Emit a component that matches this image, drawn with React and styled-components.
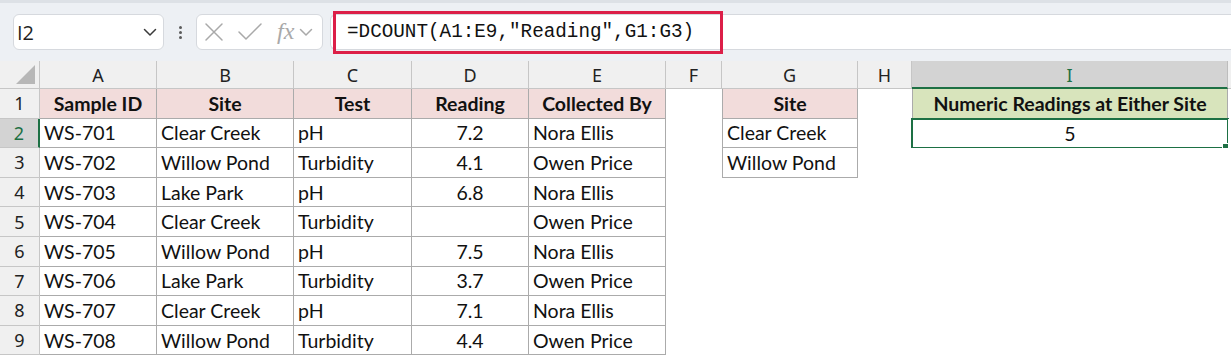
import React from "react";
import styled, { createGlobalStyle } from "styled-components";

const GlobalStyle = createGlobalStyle`
  html, body { margin: 0; padding: 0; background: #ffffff; }
  body { font-family: "Lato", "Open Sans", sans-serif; overflow: hidden; }
  * { box-sizing: border-box; }
`;

const Page = styled.div`
  width: 1231px;
  height: 357px;
  overflow: hidden;
  background: #ffffff;
`;

const FormulaBar = styled.div`
  height: 62px;
  display: flex;
  align-items: center;
  padding: 0 0 0 13px;
  background: #edf0f4;
  border-top: 3px solid #dde1e6;
  border-bottom: 1px solid #d3d6da;
`;

const NameBox = styled.div`
  width: 151px;
  height: 36px;
  background: #ffffff;
  border: 1px solid #d6d9de;
  border-radius: 6px;
  display: flex;
  align-items: center;
  justify-content: space-between;
  padding: 0 5px 0 3px;
  font-family: "Open Sans", "Noto Sans", sans-serif;
  font-size: 20px;
  color: #1f1f1f;
`;

const Dots = styled.div`
  width: 32px;
  display: flex;
  flex-direction: column;
  align-items: center;
  gap: 2px;
  span {
    width: 3px;
    height: 3px;
    border-radius: 50%;
    background: #5a5a5a;
  }
`;

const FxBox = styled.div`
  width: 127px;
  height: 36px;
  background: #ffffff;
  border: 1px solid #d6d9de;
  border-radius: 6px;
  display: flex;
  align-items: center;
  padding: 0 0 0 6px;
  gap: 12px;
  color: #a9a9a9;
`;

const FxText = styled.span`
  font-family: "Liberation Serif", serif;
  font-style: italic;
  font-size: 24px;
  line-height: 1;
  color: #a9a9a9;
  margin-left: 2px;
  margin-right: -8px;
  margin-bottom: 3px;
`;

const FormulaInput = styled.div`
  flex: 1;
  height: 36px;
  margin-left: 7px;
  background: #ffffff;
  border-top: 1px solid #d6d9de;
  border-bottom: 1px solid #d6d9de;
  border-left: 1px solid #d6d9de;
  border-radius: 6px 0 0 6px;
  display: flex;
  align-items: center;
  padding-left: 2px;
`;

const Highlight = styled.div`
  height: 43px;
  width: 390px;
  border: 3px solid #dc1f48;
  display: flex;
  align-items: center;
  padding-left: 11px;
  font-family: "Liberation Mono", "DejaVu Sans Mono", monospace;
  font-size: 19.3px;
  color: #111111;
  white-space: nowrap;
`;

const Grid = styled.div`
  display: grid;
  grid-template-columns: 40px 117px 137px 118px 117px 137px 56px 136px 54px 316px 1fr;
  grid-template-rows: 28px repeat(9, 29.6px);
  margin-top: -1px;
`;

const Corner = styled.div`
  background: #f0f0f0;
  border-right: 1px solid #c6c6c6;
  border-bottom: 1px solid #c6c6c6;
  position: relative;
  svg { position: absolute; right: 4px; bottom: 4px; }
`;

const ColHeader = styled.div`
  background: ${(p) => (p.$active ? "#d3d3d3" : "#f0f0f0")};
  color: ${(p) => (p.$active ? "#1d7044" : "#222222")};
  border-right: 1px solid ${(p) => (p.$active ? "#bdbdbd" : "#c6c6c6")};
  border-bottom: ${(p) => (p.$active ? "2px solid #1d7044" : "1px solid #c6c6c6")};
  display: flex;
  align-items: center;
  justify-content: center;
  font-family: "Noto Sans", "Open Sans", sans-serif;
  font-size: 18px;
  padding-top: ${(p) => (p.$active ? "1px" : "0")};
`;

const RowHeader = styled.div`
  background: ${(p) => (p.$active ? "#d3d3d3" : "#f0f0f0")};
  color: ${(p) => (p.$active ? "#1d7044" : "#222222")};
  border-right: ${(p) => (p.$active ? "2px solid #1d7044" : "1px solid #c6c6c6")};
  border-bottom: 1px solid #c6c6c6;
  display: flex;
  align-items: center;
  justify-content: center;
  font-family: "Noto Sans", "Open Sans", sans-serif;
  font-size: 18px;
`;

const Cell = styled.div`
  background: ${(p) => p.$bg || "#ffffff"};
  border-right: ${(p) => (p.$boxed ? "1px solid #ababab" : "none")};
  border-bottom: ${(p) => (p.$boxed ? "1px solid #ababab" : "none")};
  border-left: ${(p) => (p.$left ? "1px solid #ababab" : "none")};
  display: flex;
  align-items: center;
  justify-content: ${(p) => (p.$align === "center" ? "center" : "flex-start")};
  padding: 0 4px;
  font-family: "Lato", "Open Sans", sans-serif;
  font-size: 19.5px;
  font-weight: ${(p) => (p.$bold ? 700 : 400)};
  color: #111111;
  white-space: nowrap;
  position: relative;
`;

const ActiveCell = styled(Cell)`
  outline: 2px solid #1d7044;
  outline-offset: -1px;
  border: none;
  &::after {
    content: "";
    position: absolute;
    right: -3px;
    bottom: -4px;
    width: 7px;
    height: 7px;
    background: #1d7044;
    border: 1px solid #ffffff;
  }
`;

const Chevron = ({ color = "#3a3a3a", size = 16 }) => (
  <svg width={size} height={size} viewBox="0 0 16 16" fill="none">
    <path d="M2.5 5.5 L8 11 L13.5 5.5" stroke={color} strokeWidth="1.5" strokeLinecap="round" strokeLinejoin="round" />
  </svg>
);

const Cross = () => (
  <svg width="22" height="22" viewBox="0 0 22 22" fill="none">
    <path d="M3 3 L19 19 M19 3 L3 19" stroke="#a9a9a9" strokeWidth="1.5" strokeLinecap="round" />
  </svg>
);

const Check = () => (
  <svg width="26" height="22" viewBox="0 0 26 22" fill="none">
    <path d="M2 11 L9 18 L24 3" stroke="#a9a9a9" strokeWidth="1.5" strokeLinecap="round" strokeLinejoin="round" />
  </svg>
);

const columns = ["A", "B", "C", "D", "E", "F", "G", "H", "I", ""];

const data = [
  ["WS-701", "Clear Creek", "pH", "7.2", "Nora Ellis"],
  ["WS-702", "Willow Pond", "Turbidity", "4.1", "Owen Price"],
  ["WS-703", "Lake Park", "pH", "6.8", "Nora Ellis"],
  ["WS-704", "Clear Creek", "Turbidity", "", "Owen Price"],
  ["WS-705", "Willow Pond", "pH", "7.5", "Nora Ellis"],
  ["WS-706", "Lake Park", "Turbidity", "3.7", "Owen Price"],
  ["WS-707", "Clear Creek", "pH", "7.1", "Nora Ellis"],
  ["WS-708", "Willow Pond", "Turbidity", "4.4", "Owen Price"],
];

const headers = ["Sample ID", "Site", "Test", "Reading", "Collected By"];
const criteria = ["Site", "Clear Creek", "Willow Pond"];
const PINK = "#f2dcdb";
const GREEN = "#d8e4bc";

export default function App() {
  const rows = [];
  rows.push(
    <React.Fragment key="r1">
      <RowHeader>1</RowHeader>
      {headers.map((h) => (
        <Cell key={h} $boxed $bg={PINK} $bold $align="center">{h}</Cell>
      ))}
      <Cell />
      <Cell $boxed $left $bg={PINK} $bold $align="center">Site</Cell>
      <Cell />
      <Cell $boxed $left $bg={GREEN} $bold $align="center">Numeric Readings at Either Site</Cell>
      <Cell />
    </React.Fragment>
  );
  data.forEach((r, i) => {
    const n = i + 2;
    const crit = criteria[n - 1];
    rows.push(
      <React.Fragment key={n}>
        <RowHeader $active={n === 2}>{n}</RowHeader>
        {r.map((v, j) => (
          <Cell key={j} $boxed $align={j === 3 ? "center" : "left"}>{v}</Cell>
        ))}
        <Cell />
        {crit ? <Cell $boxed $left>{crit}</Cell> : <Cell />}
        <Cell />
        {n === 2 ? <ActiveCell $align="center">5</ActiveCell> : <Cell />}
        <Cell />
      </React.Fragment>
    );
  });

  return (
    <Page>
      <GlobalStyle />
      <FormulaBar>
        <NameBox>
          <span>I2</span>
          <Chevron />
        </NameBox>
        <Dots>
          <span />
          <span />
          <span />
        </Dots>
        <FxBox>
          <Cross />
          <Check />
          <FxText>fx</FxText>
          <Chevron color="#a9a9a9" />
        </FxBox>
        <FormulaInput>
          <Highlight>=DCOUNT(A1:E9,"Reading",G1:G3)</Highlight>
        </FormulaInput>
      </FormulaBar>
      <Grid>
        <Corner>
          <svg width="19" height="19" viewBox="0 0 19 19">
            <polygon points="19,0 19,19 0,19" fill="#b7b7b7" />
          </svg>
        </Corner>
        {columns.map((c, i) => (
          <ColHeader key={i} $active={c === "I"}>{c}</ColHeader>
        ))}
        {rows}
      </Grid>
    </Page>
  );
}
